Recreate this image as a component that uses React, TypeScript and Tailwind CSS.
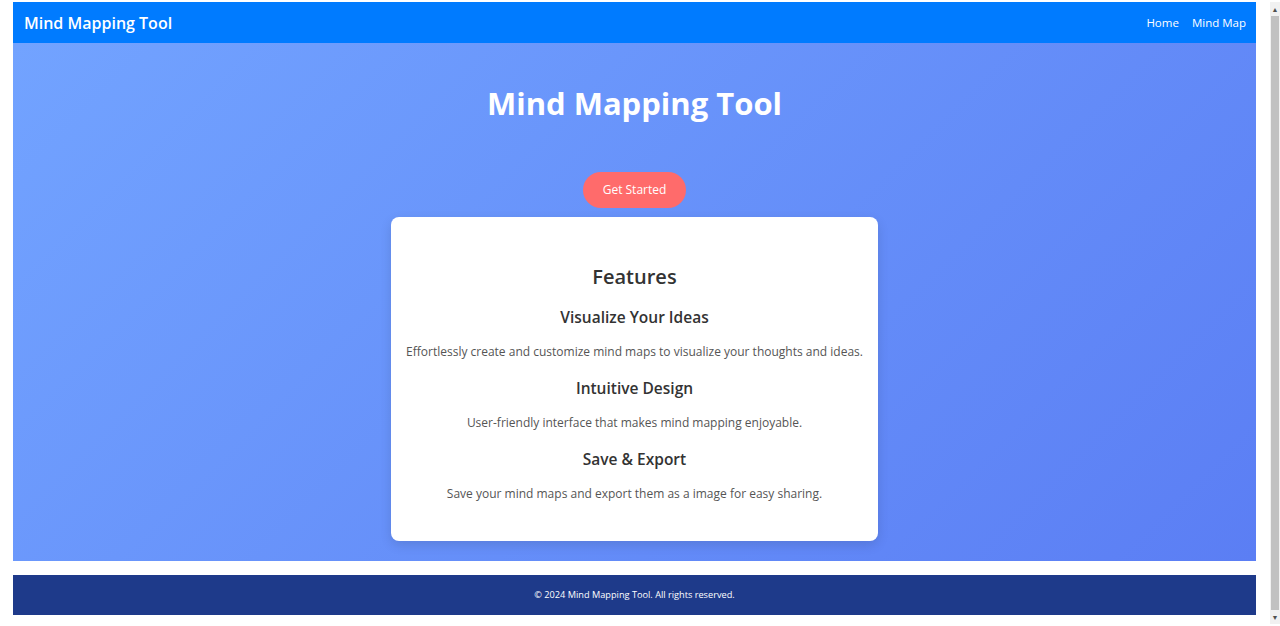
export default function App() {
  return (
    <div className="flex h-[626px] w-[1280px] overflow-hidden bg-white font-['Open_Sans',sans-serif]">
      <div className="ml-[13px] mt-[2px] flex w-[1243px] flex-col">
        <nav className="flex h-[41px] items-center justify-between bg-[#007bff] pl-[11px] pr-[10px] text-white">
          <span className="pt-[1px] text-[16px] font-semibold">Mind Mapping Tool</span>
          <div className="flex gap-[13px] pt-[1px] text-[11.5px]">
            <a>Home</a>
            <a>Mind Map</a>
          </div>
        </nav>

        <section className="flex flex-col items-center bg-[linear-gradient(135deg,#72a3ff_0%,#5b7ef4_100%)] pb-[20px] pt-[40px]">
          <h1 className="text-[31px] font-bold leading-[40px] text-white">Mind Mapping Tool</h1>
          <button type="button" className="mt-[49px] h-[36px] w-[103px] rounded-full bg-[#ff6b6b] text-[12px] text-white">
            Get Started
          </button>
          <div className="mt-[9px] flex w-[487px] flex-col items-center rounded-lg bg-white pb-[37px] pt-[44px] text-center shadow-[0_4px_12px_rgba(0,0,0,0.12)]">
            <h2 className="text-[20px] font-semibold leading-[32px] text-[#333]">Features</h2>
            <Feature
              first
              title="Visualize Your Ideas"
              text="Effortlessly create and customize mind maps to visualize your thoughts and ideas."
            />
            <Feature title="Intuitive Design" text="User-friendly interface that makes mind mapping enjoyable." />
            <Feature title="Save & Export" text="Save your mind maps and export them as a image for easy sharing." />
          </div>
        </section>

        <footer className="mt-[14px] flex h-[40px] items-center justify-center bg-[#1e3a8a] text-[9.2px] font-medium text-white">
          © 2024 Mind Mapping Tool. All rights reserved.
        </footer>
      </div>

      <div className="ml-[14px] mt-[2px] flex h-[622px] w-[10px] flex-col bg-[#f1f1f1]">
        <div className="flex h-[14px] items-center justify-center text-[7px] leading-none text-[#505050]">▲</div>
        <div className="mx-[1px] flex-1 bg-[#c1c1c1]" />
        <div className="flex h-[14px] items-center justify-center text-[7px] leading-none text-[#505050]">▼</div>
      </div>
    </div>
  )
}

function Feature({ title, text, first }: { title: string; text: string; first?: boolean }) {
  return (
    <>
      <h3 className={`${first ? 'mt-[12px]' : 'mt-[14px]'} text-[15.5px] font-semibold leading-[24px] text-[#333]`}>{title}</h3>
      <p className="mt-[13px] text-[12px] leading-[20px] text-[#555]">{text}</p>
    </>
  )
}
